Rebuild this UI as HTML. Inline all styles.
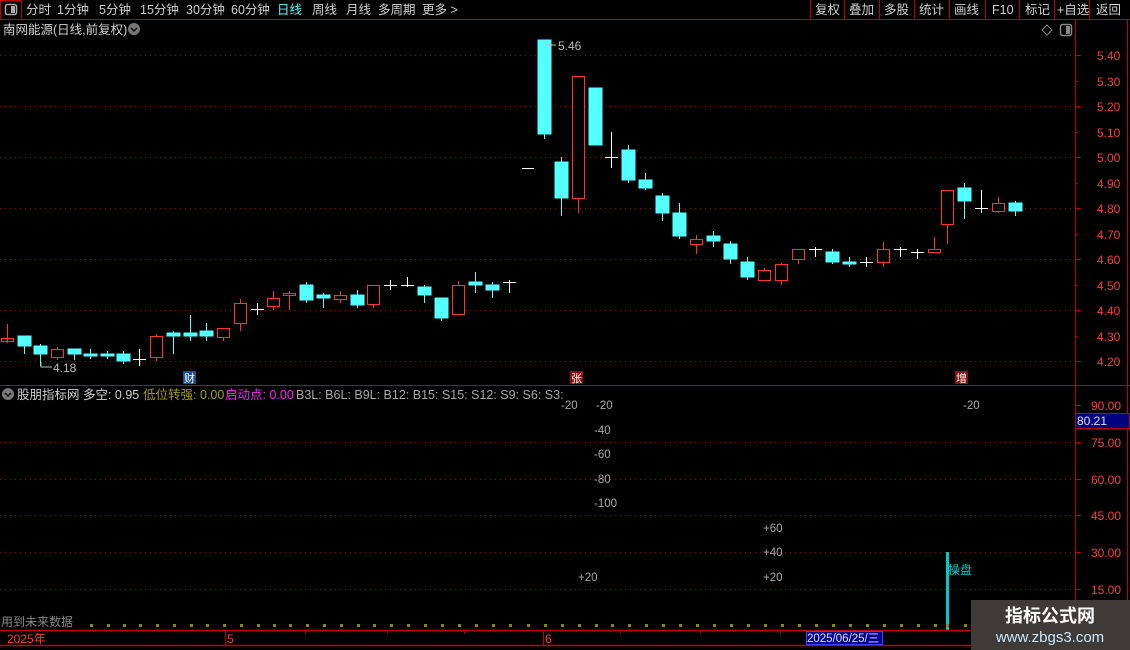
<!DOCTYPE html>
<html><head><meta charset="utf-8"><style>
html,body{margin:0;padding:0;background:#000;}
body{width:1130px;height:650px;overflow:hidden;position:relative;font-family:"Liberation Sans","Noto Sans CJK SC",sans-serif;}
svg{position:absolute;left:0;top:0;}
text{font-family:"Liberation Sans","Noto Sans CJK SC",sans-serif;}
</style></head><body>
<svg width="1130" height="650" viewBox="0 0 1130 650" xmlns="http://www.w3.org/2000/svg">
<!-- toolbar -->
<rect x="0.5" y="0.5" width="21" height="19" fill="none" stroke="#c00000"/>
<rect x="5.5" y="4.5" width="11" height="10" rx="2" fill="none" stroke="#aaa" stroke-width="1.5"/>
<rect x="11" y="6" width="4" height="7" fill="#aaa"/>
<line x1="0" y1="19.5" x2="1130" y2="19.5" stroke="#c00000"/>
<g font-size="12.5" fill="#d0d0d0">
<text x="26" y="14">分时</text><text x="57" y="14">1分钟</text><text x="99" y="14">5分钟</text><text x="140" y="14">15分钟</text><text x="186" y="14">30分钟</text><text x="231" y="14">60分钟</text>
<text x="277" y="14" fill="#54ffff">日线</text><text x="312" y="14">周线</text><text x="346" y="14">月线</text><text x="378" y="14">多周期</text><text x="422" y="14">更多 &gt;</text>
<text x="815" y="14">复权</text><text x="849" y="14">叠加</text><text x="884" y="14">多股</text><text x="919" y="14">统计</text><text x="954" y="14">画线</text><text x="992" y="14">F10</text><text x="1025" y="14">标记</text><text x="1057" y="14">+自选</text><text x="1096" y="14">返回</text>
</g>
<g stroke="#c00000"><line x1="810.5" y1="0" x2="810.5" y2="19"/><line x1="844.5" y1="0" x2="844.5" y2="19"/><line x1="879.5" y1="0" x2="879.5" y2="19"/><line x1="914.5" y1="0" x2="914.5" y2="19"/><line x1="949.5" y1="0" x2="949.5" y2="19"/><line x1="985.5" y1="0" x2="985.5" y2="19"/><line x1="1019.5" y1="0" x2="1019.5" y2="19"/><line x1="1054.5" y1="0" x2="1054.5" y2="19"/><line x1="1089.5" y1="0" x2="1089.5" y2="19"/></g>
<!-- title -->
<text x="3" y="34" font-size="12.5" fill="#d0d0d0">南网能源(日线,前复权)</text>
<circle cx="134" cy="29" r="6" fill="#777"/><path d="M131 28 L134 31 L137 28" stroke="#111" stroke-width="1.5" fill="none"/>
<path d="M1047 25 L1052 30 L1047 35 L1042 30 Z" fill="none" stroke="#888"/>
<rect x="1060.5" y="24.5" width="11" height="11" rx="2" fill="none" stroke="#888" stroke-width="1.5"/><rect x="1066" y="26" width="4" height="8" fill="#888"/>
<!-- axes -->
<line x1="1075.5" y1="20" x2="1075.5" y2="630" stroke="#c00000"/>
<line x1="1127.5" y1="20" x2="1127.5" y2="630" stroke="#c00000"/>
<line x1="0" y1="385.5" x2="1130" y2="385.5" stroke="#c00000"/>
<g stroke="#b00000" stroke-dasharray="1,4">
<line x1="0" y1="55.5" x2="1075" y2="55.5"/><line x1="0" y1="106.5" x2="1075" y2="106.5"/><line x1="0" y1="157.5" x2="1075" y2="157.5"/><line x1="0" y1="208.5" x2="1075" y2="208.5"/><line x1="0" y1="259.5" x2="1075" y2="259.5"/><line x1="0" y1="310.5" x2="1075" y2="310.5"/><line x1="0" y1="361.5" x2="1075" y2="361.5"/>
<line x1="0" y1="442.5" x2="1075" y2="442.5"/><line x1="0" y1="479.5" x2="1075" y2="479.5"/><line x1="0" y1="515.5" x2="1075" y2="515.5"/><line x1="0" y1="552.5" x2="1075" y2="552.5"/><line x1="0" y1="589.5" x2="1075" y2="589.5"/>
</g>
<g stroke="#c00000">
<line x1="1075" y1="55.5" x2="1081" y2="55.5"/><line x1="1075" y1="81.5" x2="1078" y2="81.5"/><line x1="1075" y1="106.5" x2="1081" y2="106.5"/><line x1="1075" y1="132.5" x2="1078" y2="132.5"/><line x1="1075" y1="157.5" x2="1081" y2="157.5"/><line x1="1075" y1="183.5" x2="1078" y2="183.5"/><line x1="1075" y1="208.5" x2="1081" y2="208.5"/><line x1="1075" y1="234.5" x2="1078" y2="234.5"/><line x1="1075" y1="259.5" x2="1081" y2="259.5"/><line x1="1075" y1="285.5" x2="1078" y2="285.5"/><line x1="1075" y1="310.5" x2="1081" y2="310.5"/><line x1="1075" y1="336.5" x2="1078" y2="336.5"/><line x1="1075" y1="361.5" x2="1081" y2="361.5"/>
<line x1="1075" y1="405.5" x2="1081" y2="405.5"/><line x1="1075" y1="442.5" x2="1081" y2="442.5"/><line x1="1075" y1="479.5" x2="1081" y2="479.5"/><line x1="1075" y1="515.5" x2="1081" y2="515.5"/><line x1="1075" y1="552.5" x2="1081" y2="552.5"/><line x1="1075" y1="589.5" x2="1081" y2="589.5"/>
</g>
<g font-size="12" fill="#ff3c3c">
<text x="1097" y="60">5.40</text><text x="1097" y="86">5.30</text><text x="1097" y="111">5.20</text><text x="1097" y="137">5.10</text><text x="1097" y="162">5.00</text><text x="1097" y="188">4.90</text><text x="1097" y="213">4.80</text><text x="1097" y="239">4.70</text><text x="1097" y="264">4.60</text><text x="1097" y="290">4.50</text><text x="1097" y="315">4.40</text><text x="1097" y="341">4.30</text><text x="1097" y="366">4.20</text>
<text x="1091" y="410">90.00</text><text x="1091" y="447">75.00</text><text x="1091" y="484">60.00</text><text x="1091" y="520">45.00</text><text x="1091" y="557">30.00</text><text x="1091" y="594">15.00</text>
</g>
<rect x="1075.5" y="413.5" width="54" height="15" fill="#000080" stroke="#c00000"/>
<text x="1077" y="425" font-size="12" fill="#e0e0ff">80.21</text>
<!-- candles -->
<g id="c" stroke-width="1">
<g stroke="#ff3232" fill="none">
<line x1="7.5" y1="324" x2="7.5" y2="343"/><rect x="1.5" y="338.5" width="12" height="3"/>
<line x1="57.5" y1="347" x2="57.5" y2="360"/><rect x="51.5" y="349.5" width="12" height="8" fill="#000"/>
<line x1="156.5" y1="334" x2="156.5" y2="361"/><rect x="150.5" y="336.5" width="12" height="21" fill="#000"/>
<line x1="223.5" y1="328" x2="223.5" y2="341"/><rect x="217.5" y="328.5" width="12" height="9" fill="#000"/>
<line x1="240.5" y1="299" x2="240.5" y2="331"/><rect x="234.5" y="303.5" width="12" height="20" fill="#000"/>
<line x1="273.5" y1="291" x2="273.5" y2="310"/><rect x="267.5" y="298.5" width="12" height="8" fill="#000"/>
<line x1="289.5" y1="291" x2="289.5" y2="310"/><rect x="283.5" y="293.5" width="12" height="2" fill="#000"/>
<line x1="340.5" y1="291" x2="340.5" y2="303"/><rect x="334.5" y="295.5" width="12" height="4" fill="#000"/>
<line x1="373.5" y1="285" x2="373.5" y2="308"/><rect x="367.5" y="285.5" width="12" height="19" fill="#000"/>
<line x1="458.5" y1="281" x2="458.5" y2="315"/><rect x="452.5" y="285.5" width="12" height="29" fill="#000"/>
<line x1="578.5" y1="76" x2="578.5" y2="213"/><rect x="572.5" y="76.5" width="12" height="122" fill="#000"/>
<line x1="696.5" y1="235" x2="696.5" y2="254"/><rect x="690.5" y="239.5" width="12" height="5" fill="#000"/>
<line x1="764.5" y1="268" x2="764.5" y2="280"/><rect x="758.5" y="270.5" width="12" height="10" fill="#000"/>
<line x1="781.5" y1="263" x2="781.5" y2="285"/><rect x="775.5" y="264.5" width="12" height="16" fill="#000"/>
<line x1="798.5" y1="249" x2="798.5" y2="264"/><rect x="792.5" y="249.5" width="12" height="10" fill="#000"/>
<line x1="883.5" y1="242" x2="883.5" y2="267"/><rect x="877.5" y="249.5" width="12" height="13" fill="#000"/>
<line x1="934.5" y1="237" x2="934.5" y2="252"/><rect x="928.5" y="249.5" width="12" height="3" fill="#000"/>
<line x1="947.5" y1="190" x2="947.5" y2="244"/><rect x="941.5" y="190.5" width="12" height="34" fill="#000"/>
<line x1="998.5" y1="197" x2="998.5" y2="213"/><rect x="992.5" y="203.5" width="12" height="8" fill="#000"/>
</g>
<g stroke="#54ffff" fill="#54ffff">
<line x1="24.5" y1="336" x2="24.5" y2="354"/><rect x="18" y="336" width="13" height="10"/>
<line x1="40.5" y1="344" x2="40.5" y2="366"/><rect x="34" y="346" width="13" height="8"/>
<line x1="74.5" y1="349" x2="74.5" y2="360"/><rect x="68" y="349" width="13" height="5"/>
<line x1="90.5" y1="349" x2="90.5" y2="359"/><rect x="84" y="354" width="13" height="2"/>
<line x1="107.5" y1="351" x2="107.5" y2="359"/><rect x="101" y="354" width="13" height="2"/>
<line x1="123.5" y1="351" x2="123.5" y2="364"/><rect x="117" y="354" width="13" height="7"/>
<line x1="173.5" y1="331" x2="173.5" y2="354"/><rect x="167" y="333" width="13" height="3"/>
<line x1="190.5" y1="315" x2="190.5" y2="341"/><rect x="184" y="333" width="13" height="3"/>
<line x1="206.5" y1="323" x2="206.5" y2="341"/><rect x="200" y="331" width="13" height="5"/>
<line x1="306.5" y1="282" x2="306.5" y2="303"/><rect x="300" y="285" width="13" height="15"/>
<line x1="323.5" y1="293" x2="323.5" y2="308"/><rect x="317" y="295" width="13" height="3"/>
<line x1="357.5" y1="290" x2="357.5" y2="308"/><rect x="351" y="295" width="13" height="10"/>
<line x1="424.5" y1="285" x2="424.5" y2="303"/><rect x="418" y="287" width="13" height="8"/>
<line x1="441.5" y1="298" x2="441.5" y2="321"/><rect x="435" y="298" width="13" height="20"/>
<line x1="475.5" y1="272" x2="475.5" y2="293"/><rect x="469" y="282" width="13" height="3"/>
<line x1="492.5" y1="282" x2="492.5" y2="298"/><rect x="486" y="285" width="13" height="5"/>
<line x1="544.5" y1="40" x2="544.5" y2="139"/><rect x="538" y="40" width="13" height="94"/>
<line x1="561.5" y1="157" x2="561.5" y2="216"/><rect x="555" y="162" width="13" height="36"/>
<rect x="589" y="88" width="13" height="57"/>
<line x1="628.5" y1="145" x2="628.5" y2="183"/><rect x="622" y="150" width="13" height="30"/>
<line x1="645.5" y1="173" x2="645.5" y2="190"/><rect x="639" y="180" width="13" height="8"/>
<line x1="662.5" y1="193" x2="662.5" y2="221"/><rect x="656" y="196" width="13" height="17"/>
<line x1="679.5" y1="203" x2="679.5" y2="239"/><rect x="673" y="213" width="13" height="23"/>
<line x1="713.5" y1="231" x2="713.5" y2="247"/><rect x="707" y="236" width="13" height="5"/>
<line x1="730.5" y1="241" x2="730.5" y2="264"/><rect x="724" y="244" width="13" height="15"/>
<line x1="747.5" y1="257" x2="747.5" y2="280"/><rect x="741" y="262" width="13" height="15"/>
<line x1="832.5" y1="249" x2="832.5" y2="264"/><rect x="826" y="252" width="13" height="10"/>
<line x1="849.5" y1="257" x2="849.5" y2="267"/><rect x="843" y="262" width="13" height="2"/>
<line x1="964.5" y1="183" x2="964.5" y2="219"/><rect x="958" y="188" width="13" height="13"/>
<line x1="1015.5" y1="201" x2="1015.5" y2="216"/><rect x="1009" y="203" width="13" height="8"/>
</g>
<g stroke="#ffffff">
<line x1="139.5" y1="349" x2="139.5" y2="366"/><line x1="133" y1="359.5" x2="146" y2="359.5"/>
<line x1="257.5" y1="303" x2="257.5" y2="315"/><line x1="251" y1="309.5" x2="264" y2="309.5"/>
<line x1="390.5" y1="280" x2="390.5" y2="290"/><line x1="384" y1="285.5" x2="397" y2="285.5"/>
<line x1="407.5" y1="277" x2="407.5" y2="287"/><line x1="401" y1="285.5" x2="414" y2="285.5"/>
<line x1="509.5" y1="280" x2="509.5" y2="293"/><line x1="503" y1="282.5" x2="516" y2="282.5"/>
<line x1="522" y1="168.5" x2="534" y2="168.5"/>
<line x1="611.5" y1="132" x2="611.5" y2="168"/><line x1="605" y1="157.5" x2="618" y2="157.5"/>
<line x1="815.5" y1="247" x2="815.5" y2="257"/><line x1="809" y1="249.5" x2="822" y2="249.5"/>
<line x1="866.5" y1="257" x2="866.5" y2="267"/><line x1="860" y1="262.5" x2="873" y2="262.5"/>
<line x1="900.5" y1="247" x2="900.5" y2="257"/><line x1="894" y1="249.5" x2="907" y2="249.5"/>
<line x1="917.5" y1="249" x2="917.5" y2="259"/><line x1="911" y1="252.5" x2="924" y2="252.5"/>
<line x1="981.5" y1="190" x2="981.5" y2="213"/><line x1="975" y1="208.5" x2="988" y2="208.5"/>
</g>
</g>
<!-- markers -->
<path d="M41 362 L41 367 L52 367" stroke="#bbb" fill="none"/><text x="53" y="372" font-size="12" fill="#bbb">4.18</text>
<path d="M546 42 L546 45 L556 45" stroke="#bbb" fill="none"/><text x="558" y="50" font-size="12" fill="#bbb">5.46</text>
<rect x="183" y="371" width="13" height="13" fill="#1a4f8a"/><text x="184" y="382" font-size="11" fill="#fff">财</text>
<rect x="570" y="371" width="13" height="13" fill="#8a1010"/><text x="571" y="382" font-size="11" fill="#fff">张</text>
<rect x="955" y="371" width="13" height="13" fill="#8a1010"/><text x="956" y="382" font-size="11" fill="#fff">增</text>
<!-- indicator header -->
<circle cx="8" cy="394" r="6" fill="#777"/><path d="M5 393 L8 396 L11 393" stroke="#111" stroke-width="1.5" fill="none"/>
<g font-size="12.5">
<text x="17" y="399" fill="#d0d0d0">股朋指标网 多空: 0.95</text>
<text x="143" y="399" fill="#a0a000">低位转强: 0.00</text>
<text x="225" y="399" fill="#ff20ff">启动点: 0.00</text>
<text x="296" y="399" fill="#a8a8a8">B3L: B6L: B9L: B12: B15: S15: S12: S9: S6: S3:</text>
</g>
<g font-size="11.5" fill="#a8a8a8">
<text x="561" y="409">-20</text><text x="596" y="409">-20</text><text x="963" y="409">-20</text>
<text x="594" y="434">-40</text><text x="594" y="458">-60</text><text x="594" y="483">-80</text><text x="594" y="507">-100</text>
<text x="763" y="532">+60</text><text x="763" y="556">+40</text><text x="763" y="581">+20</text><text x="578" y="581">+20</text>
</g>
<rect x="946" y="552" width="3" height="78" fill="#00c8c8"/>
<text x="948" y="574" font-size="12" fill="#00c8c8">操盘</text>
<text x="1" y="626" font-size="12" fill="#888">用到未来数据</text>
<g fill="#8a8a00">
<rect x="90" y="624" width="3" height="3"/><rect x="107" y="624" width="3" height="3"/><rect x="123" y="624" width="3" height="3"/><rect x="139" y="624" width="3" height="3"/><rect x="156" y="624" width="3" height="3"/><rect x="173" y="624" width="3" height="3"/><rect x="190" y="624" width="3" height="3"/><rect x="206" y="624" width="3" height="3"/><rect x="223" y="624" width="3" height="3"/><rect x="240" y="624" width="3" height="3"/><rect x="257" y="624" width="3" height="3"/><rect x="273" y="624" width="3" height="3"/><rect x="289" y="624" width="3" height="3"/><rect x="306" y="624" width="3" height="3"/><rect x="323" y="624" width="3" height="3"/><rect x="340" y="624" width="3" height="3"/><rect x="357" y="624" width="3" height="3"/><rect x="373" y="624" width="3" height="3"/><rect x="390" y="624" width="3" height="3"/><rect x="407" y="624" width="3" height="3"/><rect x="424" y="624" width="3" height="3"/><rect x="441" y="624" width="3" height="3"/><rect x="458" y="624" width="3" height="3"/><rect x="475" y="624" width="3" height="3"/><rect x="492" y="624" width="3" height="3"/><rect x="509" y="624" width="3" height="3"/><rect x="527" y="624" width="3" height="3"/><rect x="544" y="624" width="3" height="3"/><rect x="561" y="624" width="3" height="3"/><rect x="578" y="624" width="3" height="3"/><rect x="595" y="624" width="3" height="3"/><rect x="611" y="624" width="3" height="3"/><rect x="628" y="624" width="3" height="3"/><rect x="645" y="624" width="3" height="3"/><rect x="662" y="624" width="3" height="3"/><rect x="679" y="624" width="3" height="3"/><rect x="696" y="624" width="3" height="3"/><rect x="713" y="624" width="3" height="3"/><rect x="730" y="624" width="3" height="3"/><rect x="747" y="624" width="3" height="3"/><rect x="764" y="624" width="3" height="3"/><rect x="781" y="624" width="3" height="3"/><rect x="798" y="624" width="3" height="3"/><rect x="815" y="624" width="3" height="3"/><rect x="832" y="624" width="3" height="3"/><rect x="849" y="624" width="3" height="3"/><rect x="866" y="624" width="3" height="3"/><rect x="883" y="624" width="3" height="3"/><rect x="900" y="624" width="3" height="3"/><rect x="917" y="624" width="3" height="3"/><rect x="934" y="624" width="3" height="3"/><rect x="946" y="624" width="3" height="3"/><rect x="964" y="624" width="3" height="3"/>
</g>
<!-- bottom axis -->
<line x1="0" y1="630.5" x2="1130" y2="630.5" stroke="#c00000" stroke-width="1.5"/>
<line x1="0" y1="645.5" x2="1130" y2="645.5" stroke="#c00000" stroke-width="1.5"/>
<g stroke="#c00000"><line x1="225.5" y1="631" x2="225.5" y2="645"/><line x1="543.5" y1="631" x2="543.5" y2="645"/><line x1="305.5" y1="631" x2="305.5" y2="634"/><line x1="387.5" y1="631" x2="387.5" y2="634"/><line x1="464.5" y1="631" x2="464.5" y2="634"/><line x1="620.5" y1="631" x2="620.5" y2="634"/><line x1="700.5" y1="631" x2="700.5" y2="634"/><line x1="780.5" y1="631" x2="780.5" y2="634"/><line x1="860.5" y1="631" x2="860.5" y2="634"/></g>
<g font-size="12" fill="#ff3c3c"><text x="7" y="643">2025年</text><text x="227" y="643">5</text><text x="545" y="643">6</text></g>
<rect x="806.5" y="631.5" width="76" height="13" fill="#000090" stroke="#4040ff"/>
<text x="807" y="642" font-size="11.5" fill="#e0e0ff">2025/06/25/三</text>
<!-- watermark -->
<rect x="971" y="600" width="159" height="50" fill="#3e3a38"/>
<text x="1050" y="622" font-size="18" font-weight="bold" fill="#ffffff" text-anchor="middle">指标公式网</text>
<text x="1050" y="642" font-size="15" fill="#c8e8ff" text-anchor="middle">www.zbgs3.com</text>
</svg>
</body></html>
